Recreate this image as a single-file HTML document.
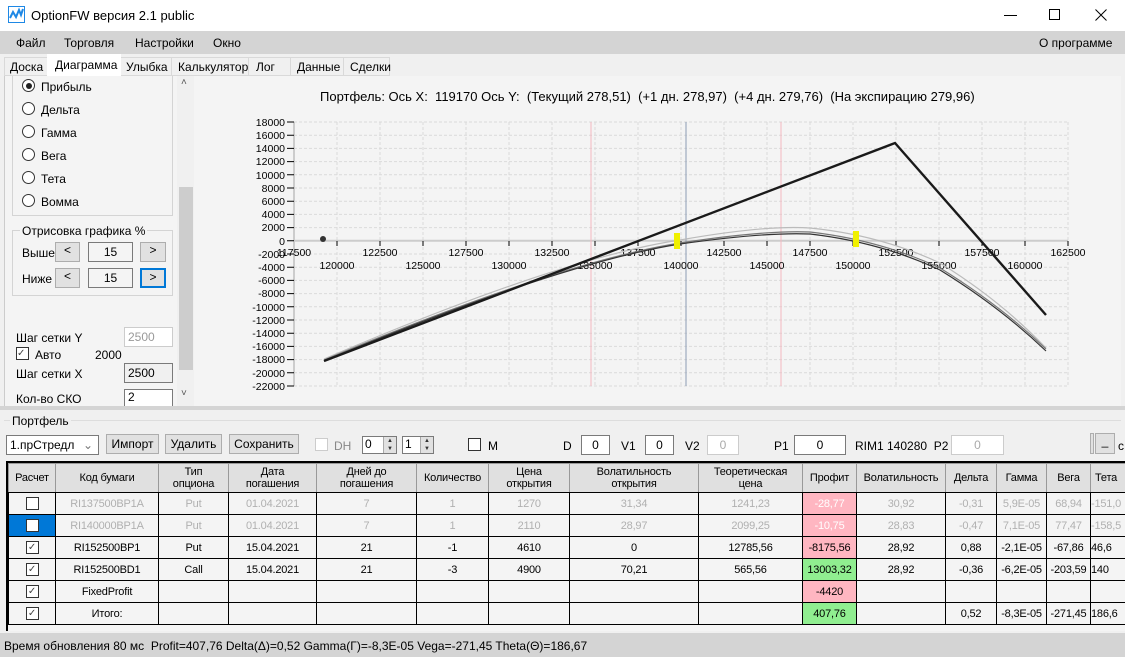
<!DOCTYPE html>
<html><head><meta charset="utf-8">
<style>
*{box-sizing:border-box;margin:0;padding:0}
body{width:1125px;height:657px;overflow:hidden;background:#f0f0f0;font-family:"Liberation Sans",sans-serif;font-size:12px;color:#000;position:relative}
.a{position:absolute}
.t{font-size:12px;white-space:nowrap}
.rb{width:13px;height:13px;border:1px solid #333;border-radius:50%;background:#fff}
.btn{background:#e1e1e1;border:1px solid #adadad;text-align:center}
.inp{background:#fff;border:1px solid #7a7a7a;text-align:center}
table{border-collapse:collapse;table-layout:fixed;font-size:11px;letter-spacing:-0.2px}
td{border:1px solid #000;text-align:center;height:22px;background:#f4f4f4;overflow:hidden;white-space:nowrap}
tr.h td{background:#e0e0e0;height:29px;line-height:12px;border-color:#999 #999 #000 #999}
tr.g td{color:#b0b0b0}
.cb{display:inline-block;width:13px;height:13px;border:1px solid #333;background:#fff;vertical-align:middle;font-size:10px;line-height:11px;color:#444}
.pk{background:#ffb6c1!important}.gr{background:#90ee90!important}
.sp{position:absolute;width:13px;height:16px;background:#e1e1e1;border-left:1px solid #aaa;font-size:6px;line-height:8px;text-align:center;color:#333}
</style></head><body>
<div class="a" style="left:0;top:0;width:1125px;height:31px;background:#fff"></div>
<svg class="a" style="left:8px;top:6px" width="18" height="18"><rect x="0.5" y="0.5" width="16" height="16" fill="#fff" stroke="#1e88e5"/><path d="M2 12 L5 6 L8 11 L11 4 L13 9 L15 3" stroke="#1e88e5" stroke-width="2" fill="none"/></svg>
<div class="a t" style="left:31px;top:8px;font-size:13px">OptionFW версия 2.1 public</div>
<div class="a" style="left:1004px;top:15px;width:13px;height:1px;background:#000"></div>
<div class="a" style="left:1049px;top:9px;width:11px;height:11px;border:1px solid #000"></div>
<svg class="a" style="left:1095px;top:9px" width="12" height="12"><path d="M0.5 0.5L11.5 11.5M11.5 0.5L0.5 11.5" stroke="#000"/></svg>
<div class="a" style="left:0;top:31px;width:1125px;height:23px;background:#d4d4d4"></div>
<div class="a t" style="left:16px;top:36px">Файл</div>
<div class="a t" style="left:64px;top:36px">Торговля</div>
<div class="a t" style="left:135px;top:36px">Настройки</div>
<div class="a t" style="left:213px;top:36px">Окно</div>
<div class="a t" style="left:1039px;top:36px">О программе</div>
<div class="a" style="left:0;top:54px;width:1125px;height:22px;background:#f0f0f0"></div>
<div class="a" style="left:4px;top:57px;width:386px;height:19px;border:1px solid #d9d9d9;background:#f0f0f0"></div>
<div class="a" style="left:47px;top:54px;width:74px;height:22px;background:#fff"></div>
<div class="a t" style="left:10px;top:60px">Доска</div>
<div class="a t" style="left:55px;top:58px">Диаграмма</div>
<div class="a t" style="left:126px;top:60px">Улыбка</div>
<div class="a" style="left:171px;top:57px;width:1px;height:19px;background:#d9d9d9"></div>
<div class="a t" style="left:178px;top:60px">Калькулятор</div>
<div class="a" style="left:248px;top:57px;width:1px;height:19px;background:#d9d9d9"></div>
<div class="a t" style="left:256px;top:60px">Лог</div>
<div class="a" style="left:290px;top:57px;width:1px;height:19px;background:#d9d9d9"></div>
<div class="a t" style="left:297px;top:60px">Данные</div>
<div class="a" style="left:343px;top:57px;width:1px;height:19px;background:#d9d9d9"></div>
<div class="a t" style="left:350px;top:60px">Сделки</div>
<div class="a" style="left:4px;top:76px;width:1117px;height:330px;background:#f4f4f4;border-left:1px solid #ccc"></div>
<div class="a" style="left:12px;top:76px;width:161px;height:140px;border:1px solid #d4d4d4;border-top:none"></div>
<div class="a rb" style="left:22px;top:79px"></div><div class="a" style="left:26px;top:83px;width:6px;height:6px;border-radius:50%;background:#222"></div>
<div class="a t" style="left:41px;top:80px">Прибыль</div>
<div class="a rb" style="left:22px;top:102px"></div><div class="a t" style="left:41px;top:103px">Дельта</div>
<div class="a rb" style="left:22px;top:125px"></div><div class="a t" style="left:41px;top:126px">Гамма</div>
<div class="a rb" style="left:22px;top:148px"></div><div class="a t" style="left:41px;top:149px">Вега</div>
<div class="a rb" style="left:22px;top:171px"></div><div class="a t" style="left:41px;top:172px">Тета</div>
<div class="a rb" style="left:22px;top:194px"></div><div class="a t" style="left:41px;top:195px">Вомма</div>
<div class="a" style="left:12px;top:230px;width:161px;height:66px;border:1px solid #d4d4d4"></div>
<div class="a t" style="left:20px;top:224px;background:#f4f4f4;padding:0 2px">Отрисовка графика %</div>
<div class="a t" style="left:22px;top:246px">Выше</div>
<div class="a btn" style="left:55px;top:242px;width:25px;height:20px">&lt;</div>
<div class="a inp" style="left:88px;top:242px;width:45px;height:20px;line-height:18px;background:#f4f4f4">15</div>
<div class="a btn" style="left:140px;top:242px;width:26px;height:20px">&gt;</div>
<div class="a t" style="left:22px;top:272px">Ниже</div>
<div class="a btn" style="left:55px;top:268px;width:25px;height:20px">&lt;</div>
<div class="a inp" style="left:88px;top:268px;width:45px;height:20px;line-height:18px;background:#f4f4f4">15</div>
<div class="a btn" style="left:140px;top:268px;width:26px;height:20px;border:2px solid #0078d7">&gt;</div>
<div class="a t" style="left:16px;top:331px">Шаг сетки Y</div>
<div class="a inp" style="left:124px;top:327px;width:49px;height:20px;border-color:#ccc;color:#999;text-align:left;padding-left:3px;line-height:18px">2500</div>
<div class="a cb" style="left:16px;top:347px">✓</div>
<div class="a t" style="left:35px;top:348px">Авто</div>
<div class="a t" style="left:95px;top:348px">2000</div>
<div class="a t" style="left:16px;top:367px">Шаг сетки X</div>
<div class="a inp" style="left:124px;top:363px;width:49px;height:20px;text-align:left;padding-left:3px;line-height:18px;background:#f0f0f0">2500</div>
<div class="a t" style="left:16px;top:392px">Кол-во СКО</div>
<div class="a inp" style="left:124px;top:389px;width:49px;height:18px;text-align:left;padding-left:3px">2</div>
<div class="a" style="left:177px;top:76px;width:17px;height:330px;background:#f0f0f0"></div>
<div class="a" style="left:179px;top:187px;width:14px;height:183px;background:#cdcdcd"></div>
<div class="a t" style="left:181px;top:77px;font-size:10px;color:#555">˄</div>
<div class="a t" style="left:181px;top:388px;font-size:10px;color:#555">˅</div>
<div class="a t" style="left:320px;top:89px;font-size:13px">Портфель: Ось X:&nbsp; 119170 Ось Y:&nbsp; (Текущий 278,51)&nbsp; (+1 дн. 278,97)&nbsp; (+4 дн. 279,76)&nbsp; (На экспирацию 279,96)</div>
<svg class="a" style="left:0;top:0" width="1125" height="410" font-family="Liberation Sans" font-size="10.5">
<g stroke="#dadada" stroke-dasharray="3,2">
<path d="M294 122H1068M294 135.2H1068M294 148.4H1068M294 161.6H1068M294 174.8H1068M294 188H1068M294 201.2H1068M294 214.4H1068M294 227.6H1068M294 254H1068M294 267.2H1068M294 280.4H1068M294 293.6H1068M294 306.8H1068M294 320H1068M294 333.2H1068M294 346.4H1068M294 359.6H1068M294 372.8H1068M294 386H1068"/>
<path d="M337 122V386M380 122V386M423 122V386M466 122V386M509 122V386M552 122V386M595 122V386M638 122V386M681 122V386M724 122V386M767 122V386M810 122V386M853 122V386M896 122V386M939 122V386M982 122V386M1025 122V386M1068 122V386"/>
</g>
<path d="M294 122V386" stroke="#ccc" stroke-width="2"/>
<path d="M294 240.8H1068" stroke="#ccc" stroke-width="2"/>
<path d="M591 122V386M781 122V386" stroke="#f4b8c0"/>
<path d="M686 122V386" stroke="#8c9cb4"/>
<g stroke="#000"><path d="M287 122h7M287 135.2h7M287 148.4h7M287 161.6h7M287 174.8h7M287 188h7M287 201.2h7M287 214.4h7M287 227.6h7M287 240.8h7M287 254h7M287 267.2h7M287 280.4h7M287 293.6h7M287 306.8h7M287 320h7M287 333.2h7M287 346.4h7M287 359.6h7M287 372.8h7M287 386h7"/>
<path d="M337 241v5M380 241v5M423 241v5M466 241v5M509 241v5M552 241v5M595 241v5M638 241v5M681 241v5M724 241v5M767 241v5M810 241v5M853 241v5M896 241v5M939 241v5M982 241v5M1025 241v5M1068 241v5"/></g>
<g text-anchor="end"><text x="285" y="126">18000</text><text x="285" y="139">16000</text><text x="285" y="152">14000</text><text x="285" y="165">12000</text><text x="285" y="179">10000</text><text x="285" y="192">8000</text><text x="285" y="205">6000</text><text x="285" y="218">4000</text><text x="285" y="231">2000</text><text x="285" y="245">0</text><text x="285" y="258">-2000</text><text x="285" y="271">-4000</text><text x="285" y="284">-6000</text><text x="285" y="297">-8000</text><text x="285" y="311">-10000</text><text x="285" y="324">-12000</text><text x="285" y="337">-14000</text><text x="285" y="350">-16000</text><text x="285" y="363">-18000</text><text x="285" y="377">-20000</text><text x="285" y="390">-22000</text></g>
<g text-anchor="middle"><text x="294" y="256">117500</text><text x="380" y="256">122500</text><text x="466" y="256">127500</text><text x="552" y="256">132500</text><text x="638" y="256">137500</text><text x="724" y="256">142500</text><text x="810" y="256">147500</text><text x="896" y="256">152500</text><text x="982" y="256">157500</text><text x="1068" y="256">162500</text>
<text x="337" y="269">120000</text><text x="423" y="269">125000</text><text x="509" y="269">130000</text><text x="595" y="269">135000</text><text x="681" y="269">140000</text><text x="767" y="269">145000</text><text x="853" y="269">150000</text><text x="939" y="269">155000</text><text x="1025" y="269">160000</text></g>
<circle cx="323" cy="239" r="3" fill="#333"/>
<path d="M324 359 Q560 258 680 240 Q765 225 810 228 Q880 235 940 263 Q1000 300 1046 348" stroke="#bbb" stroke-width="1.2" fill="none"/>
<path d="M324 360 Q560 262 680 243 Q765 230 810 232 Q880 240 940 268 Q1000 305 1046 349" stroke="#777" stroke-width="1.2" fill="none"/>
<path d="M324 361 Q560 263 680 244 Q765 232 810 234 Q880 242 940 270 Q1000 307 1046 351" stroke="#333" stroke-width="1.2" fill="none"/>
<path d="M324 361 L895 143 L1046 315" stroke="#1a1a1a" stroke-width="2.4" fill="none"/>
<rect x="674" y="233" width="6" height="16" fill="#f0f000"/>
<rect x="853" y="231" width="6" height="16" fill="#f0f000"/>
</svg>
<div class="a" style="left:0;top:406px;width:1125px;height:4px;background:#d4d4d4"></div>
<div class="a" style="left:4px;top:420px;width:1117px;height:1px;background:#ddd"></div>
<div class="a t" style="left:10px;top:414px;background:#f0f0f0;padding:0 2px">Портфель</div>
<div class="a inp" style="left:6px;top:435px;width:93px;height:20px;text-align:left;padding-left:3px;line-height:18px">1.прСтредл<span style="position:absolute;right:5px;color:#777">⌄</span></div>
<div class="a btn" style="left:106px;top:434px;width:53px;height:20px;line-height:18px">Импорт</div>
<div class="a btn" style="left:165px;top:434px;width:57px;height:20px;line-height:18px">Удалить</div>
<div class="a btn" style="left:229px;top:434px;width:70px;height:20px;line-height:18px">Сохранить</div>
<div class="a cb" style="left:315px;top:438px;border-color:#ccc"></div><div class="a t" style="left:334px;top:439px;color:#888">DH</div>
<div class="a inp" style="left:362px;top:436px;width:35px;height:18px;text-align:left;padding-left:2px">0<div class="sp" style="right:0;top:0">▲<br>▼</div></div>
<div class="a inp" style="left:402px;top:436px;width:32px;height:18px;text-align:left;padding-left:2px">1<div class="sp" style="right:0;top:0">▲<br>▼</div></div>
<div class="a cb" style="left:468px;top:438px"></div><div class="a t" style="left:488px;top:439px">M</div>
<div class="a t" style="left:563px;top:439px">D</div>
<div class="a inp" style="left:581px;top:435px;width:29px;height:20px;line-height:18px">0</div>
<div class="a t" style="left:621px;top:439px">V1</div>
<div class="a inp" style="left:645px;top:435px;width:29px;height:20px;line-height:18px">0</div>
<div class="a t" style="left:685px;top:439px">V2</div>
<div class="a inp" style="left:707px;top:435px;width:32px;height:20px;line-height:18px;border-color:#ccc;color:#aaa">0</div>
<div class="a t" style="left:774px;top:439px">P1</div>
<div class="a inp" style="left:794px;top:435px;width:52px;height:20px;line-height:18px">0</div>
<div class="a t" style="left:855px;top:439px">RIM1 140280&nbsp; P2</div>
<div class="a inp" style="left:951px;top:435px;width:53px;height:20px;line-height:18px;border-color:#ccc;color:#aaa">0</div>
<div class="a btn" style="left:1090px;top:433px;width:4px;height:21px"></div>
<div class="a btn" style="left:1095px;top:433px;width:20px;height:21px">_</div>
<div class="a t" style="left:1118px;top:439px">c</div>
<div class="a" style="left:6px;top:461px;width:1119px;height:170px;border-left:2px solid #000;border-top:2px solid #000;background:#f4f4f4"></div>
<table class="a" style="left:8px;top:463px;width:1140px">
<colgroup><col style="width:47px"><col style="width:103px"><col style="width:70px"><col style="width:88px"><col style="width:100px"><col style="width:72px"><col style="width:81px"><col style="width:129px"><col style="width:104px"><col style="width:54px"><col style="width:89px"><col style="width:51px"><col style="width:50px"><col style="width:44px"><col style="width:58px"></colgroup>
<tr class="h"><td>Расчет</td><td>Код бумаги</td><td>Тип<br>опциона</td><td>Дата<br>погашения</td><td>Дней до<br>погашения</td><td>Количество</td><td>Цена<br>открытия</td><td>Волатильность<br>открытия</td><td>Теоретическая<br>цена</td><td>Профит</td><td>Волатильность</td><td>Дельта</td><td>Гамма</td><td>Вега</td><td style="text-align:left;padding-left:4px">Тета</td></tr>
<tr class="g"><td><span class="cb"></span></td><td>RI137500BP1A</td><td>Put</td><td>01.04.2021</td><td>7</td><td>1</td><td>1270</td><td>31,34</td><td>1241,23</td><td class="pk" style="color:#fff">-28,77</td><td>30,92</td><td>-0,31</td><td>5,9E-05</td><td>68,94</td><td style="text-align:left">-151,0</td></tr>
<tr class="g"><td style="background:#0078d7"><span class="cb"></span></td><td>RI140000BP1A</td><td>Put</td><td>01.04.2021</td><td>7</td><td>1</td><td>2110</td><td>28,97</td><td>2099,25</td><td class="pk" style="color:#fff">-10,75</td><td>28,83</td><td>-0,47</td><td>7,1E-05</td><td>77,47</td><td style="text-align:left">-158,5</td></tr>
<tr><td><span class="cb">✓</span></td><td>RI152500BP1</td><td>Put</td><td>15.04.2021</td><td>21</td><td>-1</td><td>4610</td><td>0</td><td>12785,56</td><td class="pk">-8175,56</td><td>28,92</td><td>0,88</td><td>-2,1E-05</td><td>-67,86</td><td style="text-align:left">46,6</td></tr>
<tr><td><span class="cb">✓</span></td><td>RI152500BD1</td><td>Call</td><td>15.04.2021</td><td>21</td><td>-3</td><td>4900</td><td>70,21</td><td>565,56</td><td class="gr">13003,32</td><td>28,92</td><td>-0,36</td><td>-6,2E-05</td><td>-203,59</td><td style="text-align:left">140</td></tr>
<tr><td><span class="cb">✓</span></td><td>FixedProfit</td><td></td><td></td><td></td><td></td><td></td><td></td><td></td><td class="pk">-4420</td><td></td><td></td><td></td><td></td><td></td></tr>
<tr><td><span class="cb">✓</span></td><td>Итого:</td><td></td><td></td><td></td><td></td><td></td><td></td><td></td><td class="gr">407,76</td><td></td><td>0,52</td><td>-8,3E-05</td><td>-271,45</td><td style="text-align:left">186,6</td></tr>
</table>
<div class="a" style="left:0;top:633px;width:1125px;height:24px;background:#d4d4d4"></div>
<div class="a t" style="left:4px;top:639px">Время обновления 80 мс&nbsp; Profit=407,76 Delta(Δ)=0,52 Gamma(Γ)=-8,3E-05 Vega=-271,45 Theta(Θ)=186,67</div>
</body></html>
